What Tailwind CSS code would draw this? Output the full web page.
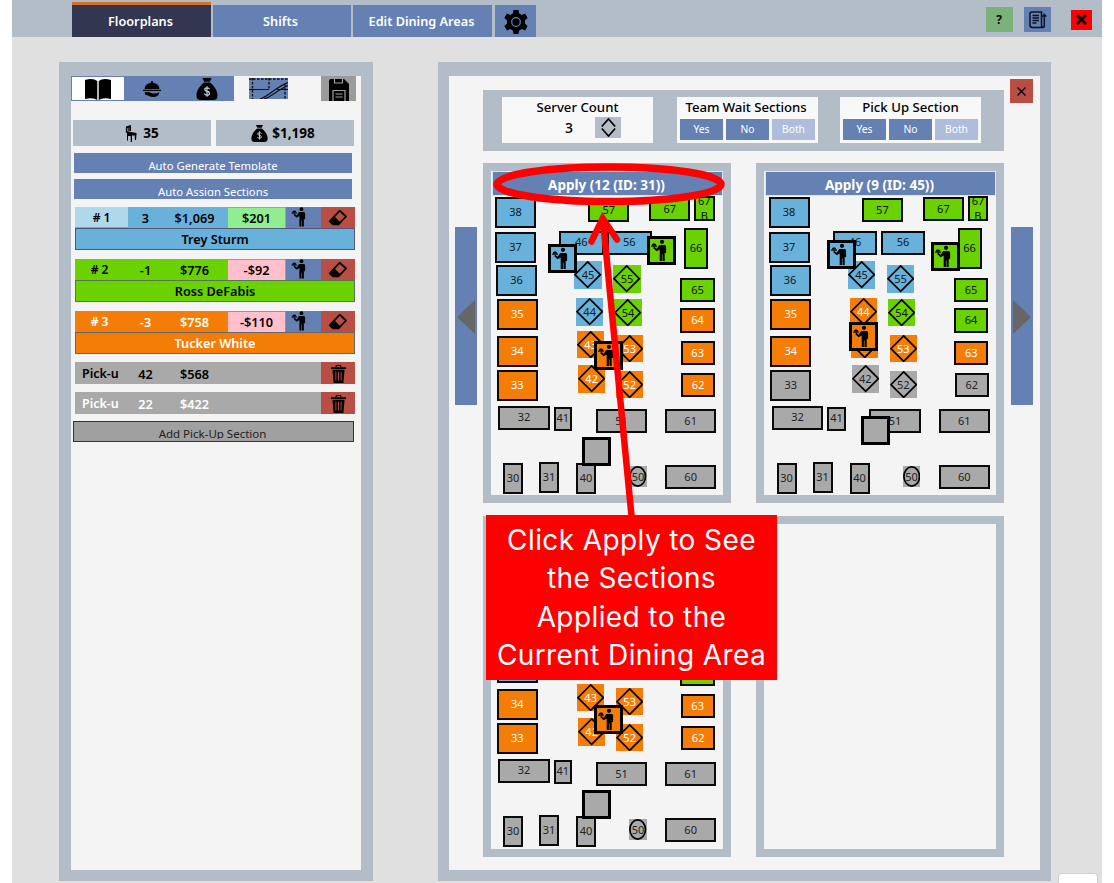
<!DOCTYPE html>
<html lang="en">
<head>
<meta charset="utf-8">
<title>Floorplans</title>
<script src="https://cdn.jsdelivr.net/npm/@tailwindcss/browser@4"></script>
</head>
<body class="bg-white">
<svg class="hidden">
  <symbol id="waiter" viewBox="0 0 29 29"><circle cx="15" cy="5.8" r="2.1"/><path d="M12.3 9h5.4q1.4.2 1.4 1.8V17h-1.4v8h-2.2v-6.500h-.6V25h-2.200V13.400L9.600 15.200 6.200 12l1-1.200 2.500 2zM4.600 9.800Q4.800 7.300 7 7.300t2.600 2.500z"/><path d="M4 9.700h6v1H4z"/></symbol>
  <symbol id="bag" viewBox="0 0 24 24"><path d="M7 0h10l-2 4H9zM8.500 5h7C19 8.500 23.500 13 23.500 19q0 5-5 5h-13q-5 0-5-5C.5 13 5 8.500 8.500 5z"/><path d="M14.800 12.200q-.5-1.500-2.800-1.500-2.500 0-2.500 1.900 0 1.600 2.500 2 2.700.4 2.700 2.200 0 2-2.700 2-2.500 0-2.900-1.700M12 9v11.500" fill="none" stroke="#c8d2e4" stroke-width="1.300"/></symbol>
  <symbol id="eraser" viewBox="0 0 20 18"><path d="M12 2 18 7.500 10.500 15.300H5L1.800 12.300 11 2.300Q11.600 1.700 12.300 2.300z" fill="none" stroke="#000" stroke-width="1.800" stroke-linejoin="round"/><path d="M6.200 7.300l6.200 5.900-2 2.300H5L1.500 12z"/></symbol>
  <symbol id="trash" viewBox="0 0 16 20"><path d="M0 3.200h16v2H0zM5 3V.8h6V3h-1.200V2H6.200v1zM1.500 6h13l-1.300 14H2.800z"/><path d="M5.200 8v9.500M8 8v9.500M10.800 8v9.500" stroke="#b94e44" stroke-width="1"/></symbol>
</svg>

<div class="relative ml-3 flex h-[883px] w-[1090px] flex-col bg-[#e0e0e0] font-['Noto_Sans','Open_Sans',sans-serif]">
  <header class="flex h-[37px] shrink-0 items-end bg-[#b3bdc7] pl-[60px] text-[12.700px] font-semibold text-white">
    <div class="flex h-[35px] w-[139px] items-center justify-center border-t-[3px] border-[#d9702a] bg-[#323650] pt-[2px] pr-[2px]">Floorplans</div>
    <div class="ml-0.5 flex h-8 w-[138px] items-center justify-center bg-[#6581b3] pt-[2px] pr-[3px]">Shifts</div>
    <div class="ml-[2px] flex h-8 w-[139px] items-center justify-center bg-[#6581b3] pt-[2px] pr-[2px]">Edit Dining Areas</div>
    <div class="ml-[3px] flex h-8 w-[41px] items-center justify-center bg-[#6581b3]">
      <svg class="mt-px h-[26px] w-[26px]" viewBox="0 0 26 26"><path d="M10.500 1h5l.7 3.500 2.600 1.400 3.300-1.300 2.500 4.500-2.600 2.300v3.200l2.600 2.300-2.500 4.500-3.300-1.300-2.600 1.400-.7 3.500h-5l-.7-3.500-2.600-1.400-3.300 1.300L1.400 16.900 4 14.600v-3.200L1.400 9.100l2.500-4.500 3.300 1.300 2.600-1.400z"/><circle cx="13" cy="13" r="4.300" fill="none" stroke="#6581b3" stroke-width="1.200"/></svg>
    </div>
    <div class="mr-[10px] mb-[5px] ml-auto flex items-center text-black">
      <div class="flex h-[25px] w-[27px] items-center justify-center bg-[#7ab37a] pr-px text-[12px] font-bold">?</div>
      <div class="ml-[11px] flex h-[25px] w-[27px] items-center justify-center bg-[#6581b3]">
        <svg class="h-[18px] w-[18px]" viewBox="0 0 18 18" fill="none" stroke="#0b1222" stroke-width="1.500"><path d="M3 1h9.500v13q0 2.500 2 2.500H3.500Q1 16.500 1 14V3q0-2 2-2zM12.500 5h2.800v10q0 1.500-1.300 1.500M15.300 6V3.500l2 2M3.500 4.500h6.500M3.500 7h6.500M3.500 9.500h6.500M3.500 12h4"/></svg>
      </div>
      <div class="ml-5 flex h-5 w-[21px] items-center justify-center bg-[#ff0000]">
        <svg class="h-[11px] w-[11px]" viewBox="0 0 11 11" stroke="#000" stroke-width="2.800"><path d="M1 1l9 9M10 1l-9 9"/></svg>
      </div>
    </div>
  </header>

  <main class="flex flex-1 items-start pt-[25px] pl-[47px]">
    <aside class="h-[819px] w-[314px] border-x-[12px] border-t-[14px] border-b-[11px] border-[#b3bdc7] bg-[#f4f4f4]">
      <div class="flex h-[25px] items-stretch">
        <div class="flex w-[54px] items-end justify-center border border-[#6581b3] bg-white">
          <svg class="h-[21px] w-[26px]" viewBox="0 0 26 21"><path d="M0 1Q8-1.200 12.300 2v19Q8 18 0 20zM26 1Q18-1.200 13.700 2v19Q18 18 26 20z"/></svg>
        </div>
        <div class="flex w-[54px] items-center justify-center bg-[#6581b3]">
          <svg class="h-[18px] w-[18px]" viewBox="0 0 18 18"><path d="M1.500 9Q2 3.500 8 2.800V1.200h2v1.600q6 .7 6.500 6.200zM0 9.800h18v1.100H0zM1.500 12.300 6 12l3.500 1.500 4-.3 3-1-1.500 3.300q-2 1.500-5 1.500-3.500-.2-5-1.500l-2.500-.7z"/></svg>
        </div>
        <div class="flex w-[55px] items-end justify-center bg-[#6581b3]"><svg class="mb-px h-[22px] w-6"><use href="#bag"/></svg></div>
        <svg class="mt-[2px] ml-[15px] h-[21px] w-[39px]" viewBox="0 0 39 21"><path d="M0 0h39v21H0z" fill="#6581b3"/><g fill="none" stroke="#111"><path d="M0 1h39M3.500 0v21M20 0v12M36 6v15" stroke-width="1.400" stroke-dasharray="2.500 1.500"/><path d="M0 11.500h20M28 11.500h11M11 21C19 19 28 8 39 4.500M15 21C22 19 30 11 39 7.500" stroke-width="1.200"/></g></svg>
        <div class="ml-[33px] flex w-[35px] items-end justify-center bg-[#9b9b9b]">
          <svg class="h-[23px] w-[20px]" viewBox="0 0 20 23"><path d="M0 3q0-2 2-2h13l5 5v17H0z"/><path d="M5.500 1v4h8V1M4 23V12.500h12V23M6.500 16h7M6.500 19h7" fill="none" stroke="#a0a0a0" stroke-width="1.200"/></svg>
        </div>
      </div>

      <div class="mt-[19px] flex gap-[5px] pl-[2px] text-[13.500px] font-bold">
        <div class="flex h-[26px] w-[138px] items-center justify-center gap-[6px] bg-[#b3bdc7] pt-px">
          <svg class="h-[17px] w-[12px]" viewBox="0 0 12 17"><path d="M1 1.500 6 0v6l-3.500.5L11.500 8v1.500L11 15h-1l-.3-4.500H7V17H5.700v-6H3v4.500H2V8L.8 7.500z"/><path d="M2.500 3v3.500M4 2.500v4" stroke="#b3bdc7" stroke-width=".6"/></svg>35
        </div>
        <div class="flex h-[26px] w-[138px] items-center justify-center gap-[4px] bg-[#b3bdc7] pt-px pr-[4px]"><svg class="h-[17px] w-[17px]"><use href="#bag"/></svg>$1,198</div>
      </div>

      <div class="mt-[7px] ml-[3px] h-5 w-[278px] overflow-hidden bg-[#6581b3] pt-[3px] text-center text-[11.300px] text-white"><div class="h-[14px] overflow-hidden leading-[19px]">Auto Generate Template</div></div>
      <div class="mt-[6px] ml-[3px] h-5 w-[278px] overflow-hidden bg-[#6581b3] pt-[3px] text-center text-[11.300px] text-white"><div class="h-[14px] overflow-hidden leading-[19px]">Auto Assign Sections</div></div>

      <section class="mt-[8px] ml-[4px] w-[280px] text-[12.700px] font-semibold">
        <div class="flex h-[21px] bg-[#67b1da] leading-[22px]">
          <div class="h-5 w-[53px] bg-[#b0d8ec] text-center text-[12px]"># 1</div><div class="w-[35px] text-center">3</div><div class="w-[63px] text-center">$1,069</div>
          <div class="mt-px ml-[2px] w-[57px] bg-[#90ee90] text-center leading-[21px]">$201</div>
          <div class="ml-px w-[35px] bg-[#6581b3]"><svg class="mt-[-3px] ml-[2px] h-[26px] w-[26px]"><use href="#waiter"/></svg></div>
          <div class="flex w-[34px] items-center justify-center bg-[#b94e44]"><svg class="h-[18px] w-5"><use href="#eraser"/></svg></div>
        </div>
        <div class="h-[22px] border border-[#557] bg-[#67b1da] text-center leading-[21px]">Trey Sturm</div>
      </section>
      <section class="mt-[9px] ml-[4px] w-[280px] text-[12.700px] font-semibold">
        <div class="flex h-[21px] bg-[#69d200] leading-[22px]">
          <div class="h-5 w-[49px] text-center text-[12px]"># 2</div><div class="w-[43px] text-center">-1</div><div class="w-[55px] text-center">$776</div>
          <div class="mt-px ml-[6px] w-[57px] bg-[#ffc0cb] text-center leading-[21px]">-$92</div>
          <div class="ml-px w-[35px] bg-[#6581b3]"><svg class="mt-[-3px] ml-[2px] h-[26px] w-[26px]"><use href="#waiter"/></svg></div>
          <div class="flex w-[34px] items-center justify-center bg-[#b94e44]"><svg class="h-[18px] w-5"><use href="#eraser"/></svg></div>
        </div>
        <div class="h-[22px] border border-[#575] bg-[#69d200] text-center leading-[20px]">Ross DeFabis</div>
      </section>
      <section class="mt-[9px] ml-[4px] w-[280px] text-[12.700px] font-semibold text-white">
        <div class="flex h-[21px] bg-[#f47d08] leading-[22px]">
          <div class="h-5 w-[49px] text-center text-[12px]"># 3</div><div class="w-[43px] text-center">-3</div><div class="w-[55px] text-center">$758</div>
          <div class="mt-px ml-[6px] w-[57px] bg-[#ffc0cb] text-center leading-[21px] text-black">-$110</div>
          <div class="ml-px w-[35px] bg-[#6581b3]"><svg class="mt-[-3px] ml-[2px] h-[26px] w-[26px]"><use href="#waiter"/></svg></div>
          <div class="flex w-[34px] items-center justify-center bg-[#b94e44]"><svg class="h-[18px] w-5"><use href="#eraser"/></svg></div>
        </div>
        <div class="h-[22px] border border-[#666] bg-[#f47d08] text-center leading-[20px]">Tucker White</div>
      </section>
      <div class="mt-[8px] ml-[4px] flex h-[22px] w-[280px] bg-[#a9a9a9] text-[12.700px] leading-[24px] font-semibold">
        <div class="w-[53px] pl-[7px] text-[12.500px]">Pick-u</div><div class="w-[35px] text-center">42</div><div class="w-[63px] text-center">$568</div>
        <div class="ml-auto flex w-[34px] items-center justify-center bg-[#b94e44]"><svg class="h-[19px] w-[15px]"><use href="#trash"/></svg></div>
      </div>
      <div class="mt-[8px] ml-[4px] flex h-[22px] w-[280px] bg-[#a9a9a9] text-[12.700px] leading-[24px] font-semibold text-white">
        <div class="w-[53px] pl-[7px] text-[12.500px]">Pick-u</div><div class="w-[35px] text-center">22</div><div class="w-[63px] text-center">$422</div>
        <div class="ml-auto flex w-[34px] items-center justify-center bg-[#b94e44]"><svg class="h-[19px] w-[15px]"><use href="#trash"/></svg></div>
      </div>
      <div class="mt-[7px] ml-[2px] h-[21px] w-[281px] border border-[#333] bg-[#a0a0a0] pt-[3px] pr-[2px] text-center text-[11.500px] text-[#222]"><div class="h-[14px] overflow-hidden leading-[18px]">Add Pick-Up Section</div></div>
    </aside>

    <section class="ml-[65px] h-[819px] w-[613px] border-x-[11px] border-t-[14px] border-b-[11px] border-[#b3bdc7] bg-[#f4f4f4]">
      <div class="flex items-start">
        <div class="mt-[14px] ml-[34px] flex h-[61px] w-[521px] bg-[#b3bdc7] pt-[7px] pl-[19px] text-[13.200px] font-medium">
          <div class="h-[46px] w-[151px] bg-[#f8f8f8] text-center">
            <div class="h-[20px] leading-[21px]">Server Count</div>
            <div class="flex h-[21px] pl-[62px]"><span class="w-[10px] text-[14px] leading-[22px]">3</span>
              <div class="ml-[21px] flex h-[21px] w-[26px] items-center justify-center bg-[#b3bdc7]"><svg class="h-[19px] w-[15px]" viewBox="0 0 15 19" fill="none" stroke="#000" stroke-width="1.700"><path d="M.8 8.500 7.500 1l6.700 7.500M.8 10.500 7.500 18l6.700-7.500"/></svg></div></div>
          </div>
          <div class="ml-6 h-[46px] w-[141px] bg-[#f8f8f8] text-center">
            <div class="h-[22px] pr-[3px] leading-[21px] tracking-[-0.050px]">Team Wait Sections</div>
            <div class="flex gap-[3px] pl-[3px] text-[10.300px] leading-[21px] font-normal text-white"><div class="h-[21px] w-[43px] bg-[#6581b3]">Yes</div><div class="h-[21px] w-[43px] bg-[#6581b3]">No</div><div class="h-[21px] w-[43px] bg-[#adbddb]">Both</div></div>
          </div>
          <div class="ml-[22px] h-[46px] w-[141px] bg-[#f8f8f8] text-center">
            <div class="h-[22px] leading-[21px]">Pick Up Section</div>
            <div class="flex gap-[3px] pl-[3px] text-[10.300px] leading-[21px] font-normal text-white"><div class="h-[21px] w-[43px] bg-[#6581b3]">Yes</div><div class="h-[21px] w-[43px] bg-[#6581b3]">No</div><div class="h-[21px] w-[43px] bg-[#adbddb]">Both</div></div>
          </div>
        </div>
        <div class="mt-[3px] ml-[6px] flex h-[24px] w-[23px] items-center justify-center bg-[#b94e44] pt-px"><svg class="h-[9px] w-[9px]" viewBox="0 0 9 9" stroke="#000" stroke-width="1.300"><path d="M.5.500l8 8M8.500.500l-8 8"/></svg></div>
      </div>
      <div class="mt-[12px] flex items-start">
        <div class="mt-[64px] ml-[6px] flex h-[178px] w-[22px] items-center justify-center bg-[#6581b3] pt-px"><svg class="h-[34px] w-[18px]" viewBox="0 0 18 34"><path d="M18 0v34L0 17z" fill="#666"/></svg></div>
        <div class="ml-[6px] grid grid-cols-[248px_248px] grid-rows-[340px_341px] gap-x-[25px] gap-y-[13px]">
          <div class="border-8 border-[#b3bdc7] bg-[#f4f4f4]">
            <div class="ml-px flex h-[25px] w-[231px] items-center justify-center border border-[#dde4ee] bg-[#6581b3] pt-[3px] pr-[2px] text-[13.500px] font-bold text-white">Apply (12 (ID: 31))</div>
            <div id="plan-a" class="relative"></div>
          </div>
          <div class="border-8 border-[#b3bdc7] bg-[#f4f4f4]">
            <div class="ml-px flex h-[25px] w-[231px] items-center justify-center border border-[#dde4ee] bg-[#6581b3] pt-[3px] pr-[2px] text-[13.500px] font-bold text-white">Apply (9 (ID: 45))</div>
            <div id="plan-b" class="relative left-[0.600px]"></div>
          </div>
          <div class="border-8 border-[#b3bdc7] bg-[#f4f4f4] pt-[25px]">
            <div id="plan-c" class="relative"></div>
          </div>
          <div class="border-8 border-[#b3bdc7] bg-[#f4f4f4]"></div>
        </div>
        <div class="mt-[64px] ml-[7px] flex h-[178px] w-[22px] items-center justify-center bg-[#6581b3] pt-px"><svg class="h-[34px] w-[18px]" viewBox="0 0 18 34"><path d="M0 0v34l18-17z" fill="#666"/></svg></div>
      </div>
    </section>
  </main>

  <div class="absolute right-[4px] bottom-0 h-[10px] w-10 rounded-t border border-b-0 border-[#d0d0d0] bg-white"></div>

  <svg class="absolute top-0 left-0 h-[883px] w-[1090px]" viewBox="12 0 1090 883" fill="none" stroke="#ff0000">
    <ellipse cx="609" cy="184.300" rx="112" ry="17.300" stroke-width="7.500"/>
    <path d="M631.500 516 603 220" stroke-width="6.500"/>
    <path d="M591.500 241.500 602.700 218.500 617 239.500" stroke-width="6.500" stroke-linecap="round"/>
  </svg>
  <div class="absolute top-[515px] left-[474px] h-[165px] w-[291px] bg-[#ff0000] pt-[6px] text-center font-['Inter',sans-serif] text-[28px] leading-[38.300px] tracking-[0.400px] whitespace-nowrap text-white">Click Apply to See<br>the Sections<br>Applied to the<br>Current Dining Area</div>
</div>

<script>
// Table positions inside a plan: name -> [x, y, width, height, shape]
const T = {
  '38': [4, 1.3, 41, 31], '37': [4, 35.5, 41, 31], '36': [5, 69.3, 41, 31], '35': [5.700, 103, 41, 31],
  '34': [5.700, 140, 41, 31], '33': [5.700, 174, 41, 31], '32': [7.300, 209.700, 51.300, 24], '41': [62.700, 210.700, 18.300, 24],
  '51': [104.700, 213, 51.700, 24], '61': [174, 213, 51.300, 24], '30': [12, 267, 20, 30.500], '31': [48, 266, 20, 30.500],
  '40': [85, 267, 20, 30.500], '50': [138.300, 269.700, 17.300, 21, 'o'], '60': [174, 269.300, 51.300, 24],
  '62': [190, 177, 34.300, 24], '63': [189.500, 145.300, 34.300, 24], '64': [189.300, 112.300, 34.300, 24.300], '65': [189.300, 82, 34.300, 24.300],
  '66': [193, 31.700, 24, 41], '57': [97.300, 2, 41, 24], '67': [158.300, 1.300, 41, 24], '67 B': [203, 0, 20.700, 24.700],
  '46': [68, 34.700, 44.700, 24], '56': [116, 34.700, 44.700, 24],
  '45': [83.300, 65.300, 27.300, 27.300, 'd'], '55': [122.300, 69.300, 27.300, 27.300, 'd'], '44': [85, 102.300, 27.300, 27.300, 'd'], '54': [123.300, 103, 27.300, 27.300, 'd'],
  '43': [86, 135, 27.300, 27.300, 'd'], '53': [125, 138.700, 27.300, 27.300, 'd'], '42': [87, 169.300, 27.300, 27.300, 'd'], '52': [125, 174.700, 27.300, 27.300, 'd']
};
const fill = { b: 'bg-[#67b1da] text-[#111820]', g: 'bg-[#69d200] text-[#112]', o: 'bg-[#f47d08] text-white', x: 'bg-[#a9a9a9] text-[#222]' };
function draw(id, groups, markers, unlabeled = []) {
  let h = '';
  for (const c in groups) for (const n of groups[c]) {
    const [x, y, w, ht, s] = T[n];
    const label = unlabeled.includes(n) ? '' : n.replace(' ', '<br>');
    const box = `left:${x}px;top:${y}px;width:${w}px;height:${ht}px`;
    if (s) {
      const shape = s === 'd' ? '<path d="M13.700 .9 26.400 13.700 13.700 26.400 .9 13.700z"/>' : '<ellipse cx="8.700" cy="10.500" rx="7.800" ry="9.600"/>';
      h += `<div class="absolute flex items-center justify-center text-[11px] leading-none ${fill[c]}" style="${box}"><svg class="absolute inset-0 h-full w-full" viewBox="0 0 ${w} ${ht}" fill="none" stroke="#000" stroke-width="1.700">${shape}</svg><span>${label}</span></div>`;
    } else {
      const pad = n === '67 B' ? 'leading-[15px]' : 'pb-[2px] leading-[15px]';
      h += `<div class="absolute flex items-center justify-center overflow-hidden border-2 border-[#0a0a0a] text-center text-[11px] ${pad} ${fill[c]}" style="${box}"><span>${label}</span></div>`;
    }
  }
  for (const [c, x, y] of markers)
    h += `<div class="absolute h-[29px] w-[29px] border-[3px] border-black ${fill[c]}" style="left:${x}px;top:${y}px">${c === 'x' ? '' : '<svg class="-mt-[3px] -ml-[3px] h-[29px] w-[29px] max-w-none" fill="#000"><use href="#waiter"/></svg>'}</div>`;
  document.getElementById(id).innerHTML = h;
}
const rest = ['32', '41', '51', '61', '30', '31', '40', '50', '60'];
draw('plan-a', { b: ['38', '37', '36', '46', '56', '45', '44'], g: ['57', '67', '67 B', '66', '65', '55', '54'], o: ['35', '34', '33', '64', '63', '62', '43', '53', '42', '52'], x: rest },
  [['b', 56.600, 48], ['g', 156, 40], ['o', 102.600, 145], ['x', 91, 241]]);
draw('plan-b', { b: ['38', '37', '36', '46', '56', '45', '55'], g: ['57', '67', '67 B', '66', '65', '64', '54'], o: ['35', '34', '63', '44', '43', '53'], x: ['33', '42', '52', '62', ...rest] },
  [['b', 62, 43.700], ['g', 166, 46], ['o', 84.300, 126.300], ['x', 96, 220]]);
draw('plan-c', { b: ['35'], g: ['64'], o: ['34', '33', '63', '62', '43', '53', '42', '52'], x: rest },
  [['o', 103.300, 156], ['x', 91, 241]], ['35', '64']);
</script>
</body>
</html>
